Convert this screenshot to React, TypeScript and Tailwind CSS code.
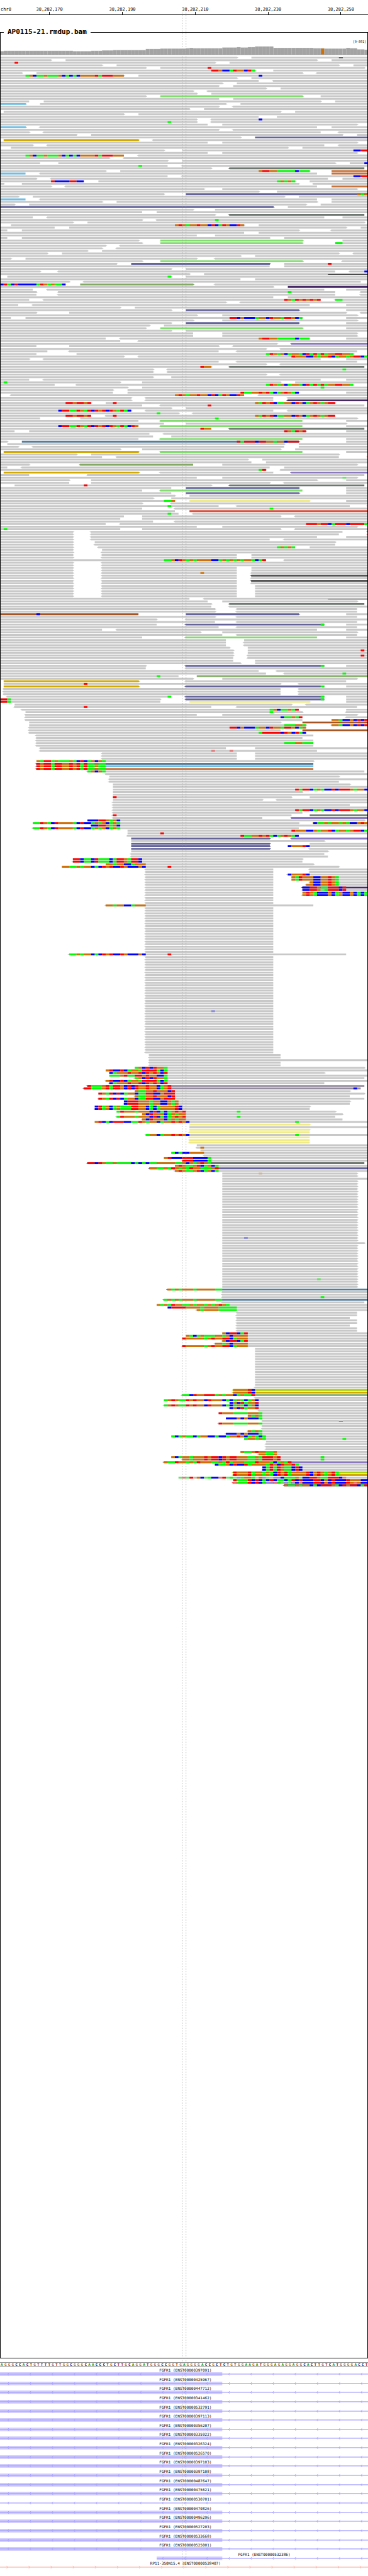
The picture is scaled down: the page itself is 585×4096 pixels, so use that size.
import React from "react";

const COLS = 101;
const CELL = 1000 / COLS;
const ROW_PITCH = 7;
const BAR = 5;

const BASE_FILL: Record<string, string> = {
  A: "#00ff00", C: "#0000ff", G: "#d17105", T: "#ff0000",
  a: "#64e664", c: "#8c8cdc", g: "#cab69e", t: "#e17878",
};

const READ_FILL: Record<string, string> = {
  b: "#6ebee6", d: "#555555", e: "#557d9b", f: "#ff0000", g: "#82dc6e",
  k: "#6e7870", l: "#8c78be", m: "#968ca0", o: "#d2aa00", p: "#462864",
  q: "#aad200", r: "#dc503c", s: "#64649b", v: "#82aa64", w: "#c8733c",
  y: "#f0eb87", z: "#a55523",
};

/*
 * One line per read row. Each row is full width except for its gaps:
 *   65>69   gap from column 65 to 69, the read before it points forward
 *   71-<75  gap from 71 to 75, the read after it points in reverse
 *   g44     colour of the read that starts at column 44
 *   58:TTG  mismatched bases from column 58 (lower case: low quality)
 *   x93-94  deletion
 * A leading "N*" repeats the row.
 */
const ROWS = `
65>69 x93-94
14>18 87>91
59>63 4:T
28>32 93>97
40>44 100>101 57:T
70>75 58:TTGCCATGGCTA
6>10 83><87
34>38 7:AGCAAGAAAGCACACGGGGTATTTGGG 71:C
65>69
71-<75
61>65
60>64
73>77
53><57
54>58
40>44 83>88 g44
60>64
8-12 88>92
7>11 62>66 b0
60><64
52>56
0-1 77>81
34>38
71-76
54><58 71:C
54><58 46:A
57-61 98>101
7><11 87-91 b0
60><64
8><12 88-<93
21>25 94>98
66>70 s70
0-1 38><42 o1
57-61 98>101
9><13 89-<93
0-3 79>83
45>50 97:CCTT
57-61 98>101
34-<38 7:AGCAAGAAAGCACACGGGGTATTTGGG
30><34
46>50
11-16 92>96 100:C
46-<50 38:A
58><63 100-101 k63
29>33 85>91 w91 71:GTTGGAAAAACAAA
7-<11 87-91 b0 w91
46-<50 97:CCTT
10><14 90-94
23-27 81>85 14:TCCCCTTCC 76:AGAGA
1>6 82><86
14><18 87-91 w91
56>61 98>101
71>76
45>51 s51 98:GAG
5>9 78>82
7-<11 87-91 b0
28>32 87>91
4>8 84>88
75>79 s0
53>59
39-43
59><63 100-101 k63
9-<13 89-94
39><43 59:A
20>24 100>101
0-3 67>71 48:GTGAGGTGGCTCATGCCTG
15-19 95>99
2-6 82><91
67-71
54-59
2-6 74>78
38>44 83>94 g44
39>44 83>92 g44 92:AA
29><33
28><32
24>28
13>17 93><97
66>70
3>7 54><59
39>44 83><94 g44
32>36 74>78 s36 90:T
74-78
47>51
11><16 92-<96 100:C
52>56 x90-101
0-2 47>51 46:A
66-70
19><23 99-101
18>22 53><59 y0 v22 0:CTACTCCCCCATGAGAAC
75>79 p79
9-<13 89-95
10><16 92-<99 79:A
10-<16 92-<99
75-79
8-<12 88-<92 78:TGATGTGTGT 92:AA
62><66
5-<9 85-95
33>37
47>51 82>95 s51
10>19 95><99
54>61 98>101
3-7 83>95 63:TTCGCCCAGGCTGGATTGCA
53>61 98>101
47>51 82>95 s51
41>45
40>44 83>95 g44
47>51
2*53-61 98>101
29-<33 85-95 71:GTTGGAAAAACAAA
33-<38
76><80 l80
10-19 60><64
73><77
13-<19 60-<65 98-101
10-21 97>101 73:ATGAGCAGGACTATATAGGTTGGA
34><38 80:TGGGCCGAGGTCAGGAGTTCA
8><12 88-95
60-<65 98-101
73><77
58><63 100-101 k63 55:TGG
42><46 94:A
42><46
73><77
42>47
8-<12 88-95
33>39 77>81 1:A
15-<21 97-101 73:ATGAGCAGGACTATATAGGTTGGA
35>39 88:A
31>35
31-35 82>95 66:TAAGGTGTACAGTGAC
0-<3 67-<71 48:GTGAGGTGGCTCATGCCTG
36><40 75-<79
36><40 75-<79 p79
25>29 92>101 18:TTGTTGT 31:T 70:GATGTCAAGGCTGCAGTGAGTT
39-<44 100-101 57:T
47>51
36><40 75-<79 16:CTTAATGATCTGTCTGATAC
49><53 43:A
25-<29 92-101 18:TTGTTGT 31:T 70:GATGTCAAGGCTGCAGTGAGTT
11-22 98>101 59:A
38-<44 83-95 g44
45-51 95>101
38-<44 83-95 g44 16:CTTAATGATCTGTCTGATACTG
58-<63 100-101 k63 55:TGG
4-8 84>95 78:TGATGT
41-<45
42-47
38-<44 83-95 g44
2>6 82>95 e6 65:TATTTCTTGGAGGCTTT
0-2 78>82
5><9 78-82
33>39 77>81
0-1 38><44 83-95 o1 g44
21>25 93>101
28-<32 93-<101 f101
68>72
69-73
8><22 53-61 98>101 v22
2-<6 74-78
73><77 71:AT
0-1 38><44 75-<80 o1 l80
8-<24 100-101
54-61 98>101 94:a
19>25 87>95
19-25 74><78
0-4 58><63 100-101 k63 23:T
47-51 82>95 s51
39-<44 83-95 g44
47-51 82>95 s51
48>52
42>47
48>52 85>95 y52 45:AAG
39><47
60-<65 96-<101 f101 46:A
39-<48 74:A
48-52 r52
49-<53 46:A
34-39 77><81
33-39
42-<48
29-<33 84:TTTGTTCATTTCTTTTA
54-61 98>101
33-39 77><81 1:A
20><25 94-<101 f101
20><25 93-<101 f101
20><25 87-95
20><25 74-<78
20>26 92>101
20><26 92-<101
20><27 81-85 76:AGAGA
20>28
20><28
2*20><28 65-69
73-<78 45:AAGCTGAGAGGGGCCAGAGAGAGGACAT
2*20><28
2*20><28 65-69
20><28 65-<69 55:G
20><28 65-<69 d69
20><28 65-<69
20><28 65-<69 d69
20><28 65-<69
5*20><28 65-70
52-<56 x90-101
57-61 98>101
58><63 100-101 k63
58-<63
2*59><65 98-101
38-51 82>95 z0 s51 10:C
59><65 98-101
43><51
59-<65 98-101
43-<51 89-95 s51 88:A
60-<65 98-101
28-<32 87-95
55>61 98>101
61-<65 98-101
39-<51 87-95 g51
62-67
2*62-<67
63>68
64>68 99:T
64>68
64><68 99:T
64-<68
64-70
66>70
40><51 89-95 s51 88:A
40-<51
71-<76
73-<78 94:A
49-54 v54 43:A
53>61 98>101
0-1 38><51 95-101 o1
0-1 77><82 23:T
0-1 38><51 89-95 o1 s51 88:A
3*0-<1 77-<82
0-<2 47-<51 89-95 s51 46:A 88:A
44><51 89-95 s51 0:TTA 88:A
44-52 85>95 y52 0:TTA
0-4 80><84
0-<4 58-<65 98-101 23:T
0-<6 82-95 74:AGCAAGAT
0-7 83><95 74:A
0-<7 54-61 98>101
0-<7 83-<95 77:CAAGAT
0-<7 83-91 91:GGACCGCTCT
0-8 77>83 z83
0-8 84><91 78:AAAGGA 91:GGACCGCTCT
0-<8 84-101 63:TTCGCCCAGGCTGGATTGCAG
0-<8 77-83 z83
0-<8 84-101 71:ATTTTTCTGCTAC
0-<10 86-101
0-<10 83-101
0-<10 86-101
0-<10 86-101 78:AAAGGAAA
0-<10 86-101
0-<11 62-70
0-<11 87-101 58:t 63:t
3*0-<28 65-70
0-10 86>101 10:GATTAGAAAGACTCAGCGA
0-<10 86-101 e10 10:TGTTATTGGTGTATAAGAA
0-<10 86-101 b10 10:TGTTATTGGTGTATAAGAA
0-<10 86-101 w10 10:TGTTATTGGTGTATAAGAA
0-<24 100-101 24:AGCGA
0-<29
0-30 93>101
0-<30
0-<30 93-101
0-31 96>101
0-31
0-31 81:TATTCAGACCTCTTTGAGGC
0-31 83>101
0-31
0-31 80>85 31:T
0-31 72><76
0-<31
0-<31 96-101
0-<31
0-<31 81:TATTCAGACCTCTTTGAGGC
0-<31 83-101
0-<31 80-85 k85 31:T
0-<31 72-<80 l80
0-24 100>101 24:CCCTTGAGC
0-9 82><86 o86 9:AATGACTGGGGACTCCAGAGCAGA 86:CAAGAGGAGACCGTG
0-<25 25:CCTTGAGC
0-<9 82-101 9:AATGACTGGGGACTCCAGAGCAGA
0-35 80:TGGGCCGAGGTCAGGAGTTCA
0-35 44:T
0-<35 82-101 66:TAAGGTGTACAGTGAC
0-36 74><80 s36 l80
0-36 89>101
0-36 74>85 s36
0-36 74>79 s36 79:CGGGTC
0-36 74><85 s36
0-36 90>101
0-<36 89-101
0-<36 90-101
0-20 83>101 20:TTCAACTAAACATTGATTC
0-<20 83-101 20:TTCAACTAAACATTGATTC
0-29 86>101 29:GGAGGCCAGGG
0-17 93>101 17:GGAAGAGGCACTGTCCTGCCCGC 46:T
2*0-<40 75-<85
0-<40 75-<79 79:CGGGTC
2*0-<40 75-80 80:GATGGGCCGGTGA
0-<40 75-<85 85:GCCGGTGA
0-<40 75-<84 84:GGCCGGTGA
0-<40 75-<83 p83 83:CCTTGAATTTCT
0-<40 75-<83 83:CCTTGaATTTCT
0-<40 75-83 83:GTGACCCGCAGCCGCACA
0-<40 75-<83 83:GTGACCCGCAGCCGCACA
3*0-<40 75-101
0-<29 86-101 29:GGAGGCCAGGG
18*0-<40 75-101
0-<19 95-101 19:AAGAGGCACTGTCCTGCCCGC 46:T
21*0-<40 75-101
0-<40 75-101 58:c
16*0-<40 75-101
2*0-<41 77-101
0-<41
2*0-<41 77-101
0-37 100>101 37:AGCTCTGGA
0-29 29:GTCCTCAGGATTTTACA
0-30 89>101 30:CAGGGTGGTCTGTGCT
0-30 30:AAAGTAATTGTGGCCA
0-<37 100-101 37:AGCTCTGGA
0-<29 29:GTCCTCAGGATTTTACA
0-<30 89-101 30:CAGGGTGGTCTGTGCT
0-<24 100-101 m24 24:TAAAGTATTGCTCTGGTGGCAGT
0-<23 99-101 m23 23:TTAAAGTATTGCTCTGGTGGCAGT 97:C
0-37 96>101 37:GAAGGTGGGCT
0-27 100>101 27:TGATCTCAGGCAATTCCGTTT
0-<37 96-101 37:GAAGGTGGGCT
0-<27 100-101 27:TGATCTCAGGCAATTCCGTTT
0-34 96>101 34:CTTTGGGAGGCCGAG
0-<34 96-101 34:CTTTGGGAGGCCGAG
0-26 85>101 26:CTAGCAGAAATTGGCACAGGGGTC
0-<26 85-101 26:CTAGCAGAAATTGGCACAGGGGTC
0-32 92>101 32:ATGGGAGGGCTCACAGTGT 65:A
0-39 94>101 39:GCTGGGCAGAGG
0-<32 92-101 32:ATGGGAGGGCTCACAGTGT 65:A
0-<39 94-101 39:GCTGGGCAGAGG
0-26 26:GTCACTTTCCAATGAGGCAGGTGTGC 81:A
0-52 85>101 y52
0-52
0-52 85>101 y52
0-<52 85-101 y52
0-<40 40:AGGCAGGTGTGC 81:A
3*0-<52 85-101 y52
0-54
0-<54 55:G
0-55
0-47 47:ACACCGGGG
0-<56
0-45 45:GTCCCTTTCCCCA
0-<50 50:TTTCCCCA
0-<24 100-101 k24 24:TTCTGAAGAAAACACACAAGGGGGAAGCGAGTGA
0-48 48:GTGAAGTCAGCA
0-<41 s41 41:GGAAGATGAGATGGAAAGT
0-<48 48:GTGAAGTCAGCA
0-61 98>101 71:g
0-61 98>101
0-61
22*0-61 98>101
0-61 98>101 67:c
0-61 98>101
0-61 100>101
13*0-61 98>101
0-61 98>101 87:a
3*0-61 98>101
0-<46 e46 46:GAGAGGGAGGGGGAA
2*0-<61
0-<61 88:A
0-<45 e45 45:AGAGAGGGAGGGGGAA
0-<61 100-101
0-43 43:GAGATGGAAGAGGAGAGTGA
0-46 46:CTTTTGGGGAGGGGAAAAA
0-<54 54:GAGGGGAAAAA
2*0-<65 98-101
0-<65 96-101
2*0-<65 98-101
0-<65 96-101
2*0-<65 98-101
0-61 61:GCTTCAT
0-51 51:GACAGAAAGGAGCGGGG
0-50 50:TGGGGGAGTGGTTCAGGG
0-<61 61:GCTTCAT
0-<59 59:GGAGCGGGG
0-<50 50:TGGGGGAGTGGTTCAGGG
15*0-70
0-<70
0-<64 q64 64:GGGGTC
0-<64 o64 64:GGGGTC
0-<50 v50 50:AACTGGTTTAGAGGCAGAAT
0-<70
0-45 45:AGTGAATGTGGCTGGGCACAGACAGC
0-63 63:CGCTAGGT
0-<45 45:AGTGAATGTGGCTGGGCACAGACAGC
0-<63 63:CGCTAGGT
0-<71
0-60 60:TGGGAAAAGGGA
0-68 68:GAGA
0-62 62:CCCGCGCCCA
0-<72 x93-94
0-<60 60:TGGGAAAAGGGA
2*0-<72
0-<68 68:GAGA
0-<62 62:CCCGCGCCCA
0-47 47:ACAGAACAGGCCACCAGGTGCAGACA
0-67 67:AGGAGA 94:A
0-73
3*0-<73
0-66 66:GAAGTGGAAG
0-<71 71:GGAAG
0-47 47:GCAGGAGGGTGTTCTGTTGGGAAGATTTGT 88:A
0-<50 50:GGAGGGTGTTCTGTTGGGAAGATTTGT 88:A
0-<45 l45 45:GAATGGAGATGGGAAGATAGGGAAATGGGACAGAT
0-<59 59:CAAGCTCCTAGGGGATGCTGGTA
0-72 72:CATATGAACTC
0-<72 72:CATATGAACTC
0-<64 q64 64:TGGGTAGGAGACTGTAGGGGTCGTGAGTA
0-<64 o64 64:TGGGTAGGAGACTGTAGGGGTCGTGAGTA
0-49 49:ataTgGCaACCtTaAacAGGAgGcagccCAAAGaCCTTGAATTTCt
0-64 64:TAAATCTCACTCAACATCTCCCTTCGCTCCCTGGGCC
0-<64 f64 64:tAAATCTCAcctAacacCtCCCTTCGCTCCCTGtGCC
0-<78 p78 78:GAAGAGGCACTTTGACTGTTCAT
`
  .trim()
  .split("\n")
  .flatMap((line) => {
    const m = line.match(/^(\d+)\*(.*)$/);
    return m ? Array<string>(Number(m[1])).fill(m[2]) : [line];
  });

type Read = { start: number; end: number; left: boolean; right: boolean };

function parseRow(spec: string) {
  const reads: Read[] = [];
  const fills: Record<number, string> = {};
  const bases: { col: number; length: number; base: string }[] = [];
  const deletions: [number, number][] = [];
  let start = 0;
  let left = false;
  for (const token of spec.split(" ")) {
    let m;
    if ((m = token.match(/^(\d+)([>-])(<?)(\d+)$/))) {
      const end = Number(m[1]);
      if (end > start) reads.push({ start, end, left, right: m[2] === ">" });
      start = Number(m[4]);
      left = m[3] === "<";
    } else if ((m = token.match(/^x(\d+)-(\d+)$/))) {
      deletions.push([Number(m[1]), Number(m[2])]);
    } else if ((m = token.match(/^([a-z])(\d+)$/))) {
      fills[Number(m[2])] = READ_FILL[m[1]];
    } else if ((m = token.match(/^(\d+):([A-Za-z]+)$/))) {
      let col = Number(m[1]);
      for (const run of m[2].match(/(.)\1*/g) ?? []) {
        bases.push({ col, length: run.length, base: run[0] });
        col += run.length;
      }
    }
  }
  if (start < COLS || left) reads.push({ start, end: COLS, left, right: false });
  return { reads, fills, bases, deletions };
}

function readPath({ start, end, left, right }: Read, y: number) {
  const a = start * CELL;
  const b = end * CELL;
  const m = y + BAR / 2;
  const head = right ? `L${b + 2.5} ${m - 0.5}H${b + 4}V${m + 0.5}H${b + 2.5}L${b} ${y + BAR}` : `V${y + BAR}`;
  const tail = left ? `L${a - 2.5} ${m + 0.5}H${a - 4}V${m - 0.5}H${a - 2.5}Z` : "Z";
  return `M${a} ${y}H${b}${head}H${a}${tail}`;
}

function ReadRow({ spec, y }: { spec: string; y: number }) {
  const { reads, fills, bases, deletions } = parseRow(spec);
  return (
    <g>
      {reads.map((r) => (
        <path key={r.start} d={readPath(r, y)} fill={fills[r.start] ?? "#c8c8c8"} />
      ))}
      {deletions.map(([a, b]) => (
        <g key={a}>
          <rect x={a * CELL} y={y} width={(b - a) * CELL + 1} height={BAR} fill="#fff" />
          <rect x={a * CELL} y={y + 2} width={(b - a) * CELL + 1} height={2} />
        </g>
      ))}
      {bases.map((s) => (
        <rect key={s.col} x={s.col * CELL} y={y} width={s.length * CELL} height={BAR} fill={BASE_FILL[s.base]} />
      ))}
    </g>
  );
}

/* [number of columns, height of the coverage bar] */
const COVERAGE: [number, number][] = [
  [1, 9], [19, 10], [5, 9], [3, 10], [3, 11], [9, 12], [4, 15], [7, 16], [1, 17], [1, 18], [8, 17], [4, 19],
  [1, 20], [2, 19], [2, 20], [5, 22], [11, 18], [2, 17], [1, 17], [6, 16], [1, 18], [2, 17], [2, 14], [1, 13],
];
const DEPTHS = COVERAGE.flatMap(([n, h]) => Array<number>(n).fill(h));
const VARIANT_COL = 88;

function Coverage() {
  return (
    <svg className="block h-[18px] w-full" viewBox="1.7 123 996.6 30.75" preserveAspectRatio="none">
      {DEPTHS.map((h, i) => (
        <g key={i}>
          <rect x={i * CELL} y={148 - h} width={CELL + 0.1} height={h} fill="#afafaf" />
          <rect x={i * CELL + 1} y={149 - h} width={CELL - 1} height={h - 1} fill={i === VARIANT_COL ? "#d17105" : "#a3a3a3"} />
        </g>
      ))}
      <rect x="0" y="148" width="1000" height="1" fill="#787878" />
    </svg>
  );
}

const TICKS = ["38,282,170", "38,282,190", "38,282,210", "38,282,230", "38,282,250"];

function Ruler() {
  return (
    <header className="mb-5 flex overflow-hidden border-b border-black pt-3 text-[7px] leading-[7px]">
      <span className="w-[3.55%] shrink-0 pl-px">chr8</span>
      <div className="grid w-[99%] shrink-0 grid-cols-5 text-center">
        {TICKS.map((t) => (
          <div key={t}>
            <div>{t}</div>
            <div className="mx-auto h-1 w-px bg-black" />
          </div>
        ))}
      </div>
    </header>
  );
}

const SEQUENCE =
  "AGGGCCACTGTTTTGTTGGCGGGCAACCCTGCTTGCAGGATGGGCCGGTGAGGGGACCGCTCTGTGGAAGATGGGAGAGGAGGCACTTGTCATGGGGACCT";

const LETTER_CLASS: Record<string, string> = {
  A: "text-[#009600]",
  C: "text-[#000096]",
  G: "text-[#b46e14]",
  T: "text-[#b40000]",
};

function Sequence() {
  return (
    <div className="mt-1.5 flex border-y border-[#999999] text-center text-[6px] leading-[5px] font-bold">
      {SEQUENCE.split("").map((c, i) => (
        <span key={i} className={`min-w-0 flex-1 ${LETTER_CLASS[c]}`}>{c}</span>
      ))}
    </div>
  );
}

type Transcript = { gene: string; id: string; exon?: [number, number]; from?: number; forward?: boolean; aside?: boolean };

const EXON_END = 61;
const TRANSCRIPTS: Transcript[] = [
  ...[
    "397091", "425967", "447712", "341462", "532791", "397113", "356207", "335922", "326324", "526570",
    "397103", "397108", "487647", "475621", "530701", "470826", "496296", "527203", "533668", "525001",
  ].map((n): Transcript => ({
    gene: "FGFR1",
    id: `ENST00000${n}`,
    exon: n === "530701" ? undefined : [0, EXON_END],
  })),
  { gene: "FGFR1", id: "ENST00000532386", exon: [43, EXON_END], from: 43, aside: true },
  { gene: "RP11-350N15.4", id: "ENST00000528407", forward: true },
];

function TranscriptRow({ gene, id, exon, from = 0, forward, aside }: Transcript) {
  const color = forward ? "#ffaa9b" : "#a09bff";
  const x0 = from * CELL;
  const arrows = Array.from({ length: 17 }, (_, i) => 22 + i * 60).filter((x) => x > x0);
  return (
    <div className="flex min-h-0 flex-1 flex-col">
      <div className={`h-[7px] shrink-0 text-center text-[6px] leading-[8px] ${aside ? "pl-[43.6%]" : "pl-[0.8%]"}`}>
        {gene} ({id})
      </div>
      <svg className="block min-h-0 w-full flex-1" viewBox="0 0 1000 13" preserveAspectRatio="none">
        {exon && <rect x={exon[0] * CELL} y="0" width={(exon[1] - exon[0]) * CELL} height="10" fill="#d2cdff" />}
        <rect x={x0} y="4" width={1000 - x0} height="2" fill={color} />
        {arrows.map((x) => (
          <path
            key={x}
            d={forward ? `M${x - 4} 1.5L${x - 1} 5L${x - 4} 8.5` : `M${x + 2} 1.5L${x - 1} 5L${x + 2} 8.5`}
            fill="none"
            stroke={color}
            strokeWidth="1.4"
          />
        ))}
      </svg>
    </div>
  );
}

export default function App() {
  return (
    <main className="relative overflow-hidden bg-white pb-[9px] font-['DejaVu_Sans_Mono',monospace] text-black">
      <Ruler />
      <fieldset className="border border-black">
        <legend className="ml-[5px] px-1.5 text-[11px] leading-[14px] font-bold">AP0115-21.rmdup.bam</legend>
        <div className="h-3.5 pt-[5px] pr-0.5 text-right text-[5px] leading-[7px]">[0-891]</div>
        <Coverage />
        <svg className="block h-[3659px] w-full" viewBox="1.7 153.74 996.6 6250.4" preserveAspectRatio="none">
          {ROWS.map((spec, i) => (
            <ReadRow key={i} spec={spec} y={154 + i * ROW_PITCH} />
          ))}
        </svg>
      </fieldset>
      <Sequence />
      <div className="mt-0.5 flex h-[322px] flex-col">
        {TRANSCRIPTS.map((t) => (
          <TranscriptRow key={t.id} {...t} />
        ))}
      </div>
      <svg
        className="pointer-events-none absolute inset-0 h-full w-full"
        viewBox="0 0 1000 6997"
        preserveAspectRatio="none"
      >
        <path d="M495.5 20V6975M505.5 20V6975" stroke="#969696" strokeWidth="1" strokeDasharray="3 4" />
      </svg>
    </main>
  );
}
